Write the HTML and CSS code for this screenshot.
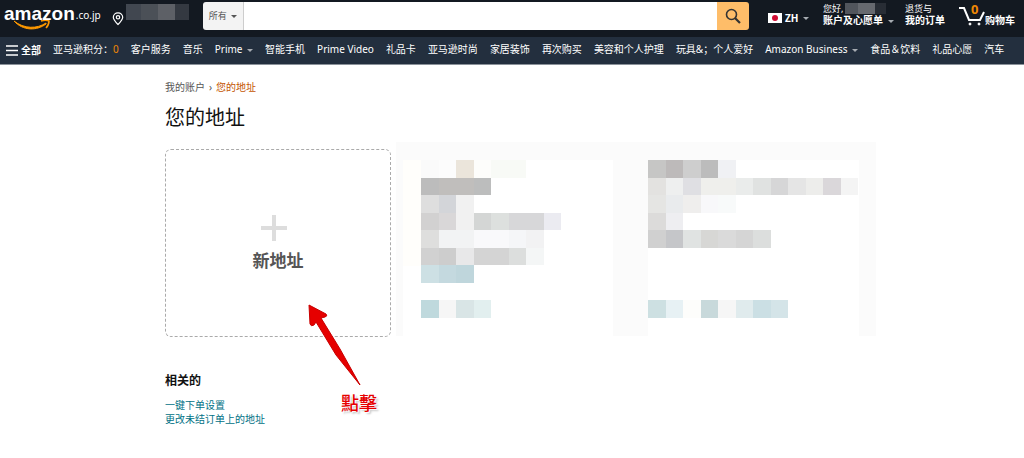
FILE: index.html
```
<!DOCTYPE html>
<html lang="zh-CN">
<head>
    <meta charset="UTF-8">
    <meta name="viewport" content="width=device-width, initial-scale=1.0">
    <title>您的地址</title>
    <link rel="stylesheet" href="styles.css">
</head>
<body>
    <header class="header">
        <a class="logo" href="#" aria-label="amazon.co.jp">
            <span class="logo-word">amazon
                <svg class="logo-smile" viewBox="0 0 40 10" aria-hidden="true">
                    <path d="M1 1C11 9 24 9 33 3L33 4C24 11 10 11 1 1z" fill="#ff9900" stroke="#ff9900"/>
                    <path d="M28 1C31 0 34 0 36 1C36 4 35 6 33 8" fill="none" stroke="#ff9900" stroke-width="1.6"/>
                </svg>
            </span>
            <span class="logo-domain">.co.jp</span>
        </a>
        <a class="location" href="#" aria-label="配送地址">
            <svg width="12" height="14" viewBox="0 0 12 14" fill="none" stroke="#fff" stroke-width="1.2">
                <path d="M6 12.5C3 9.5 1.3 7.3 1.3 5.3a4.7 4.5 0 0 1 9.4 0C10.7 7.3 9 9.5 6 12.5z"/>
                <circle cx="6" cy="5.3" r="1.7"/>
            </svg>
            <svg width="63" height="16" viewBox="0 0 63 16" shape-rendering="crispEdges">
                <path fill="#414750" d="M0 0h15v16H0z"/>
                <path fill="#4b5057" d="M15 0h17v16H15z"/>
                <path fill="#5d6066" d="M32 0h17v16H32z"/>
                <path fill="#343941" d="M49 0h14v16H49z"/>
            </svg>
        </a>
        <form class="search">
            <button class="search-scope" type="button">所有 <i class="caret"></i></button>
            <input class="search-input" type="text" aria-label="搜索">
            <button class="search-submit" type="submit" aria-label="提交">
                <svg width="16" height="16" viewBox="0 0 16 16" fill="none" stroke="#333">
                    <circle cx="6.5" cy="6.5" r="5" stroke-width="1.6"/>
                    <path d="M10 10l5 5" stroke-width="2.2"/>
                </svg>
            </button>
        </form>
        <div class="tools">
            <button class="lang" type="button">
                <svg width="14" height="10" viewBox="0 0 14 10">
                    <rect width="14" height="10" fill="#fff"/>
                    <circle cx="7" cy="5" r="3" fill="#d00c33"/>
                </svg>
                <b>ZH</b>
                <i class="caret"></i>
            </button>
            <a class="tool account" href="#">
                <span class="tool-top">您好,
                    <svg width="41" height="11" viewBox="0 0 41 11" shape-rendering="crispEdges">
                        <path fill="#51555c" d="M0 0h13v11H0z"/>
                        <path fill="#66696f" d="M13 0h17v11H13z"/>
                        <path fill="#282d35" d="M30 0h11v11H30z"/>
                    </svg>
                </span>
                <b>账户及心愿单 <i class="caret"></i></b>
            </a>
            <a class="tool" href="#">
                <span class="tool-top">退货与</span>
                <b>我的订单</b>
            </a>
            <a class="cart" href="#">
                <svg width="26" height="20" viewBox="0 0 26 20" fill="none" stroke="#fff" stroke-width="2">
                    <path d="M0 2h5l5 12h11l4-8"/>
                    <circle cx="11" cy="18" r="1" fill="#fff" stroke-width="1"/>
                    <circle cx="20" cy="18" r="1" fill="#fff" stroke-width="1"/>
                </svg>
                <span class="cart-count">0</span>
                <b>购物车</b>
            </a>
        </div>
    </header>

    <nav class="nav">
        <a class="nav-all" href="#">
            <svg width="12" height="11" viewBox="0 0 12 11" stroke="#fff" stroke-width="1.3">
                <path d="M0 1h12M0 5.5h12M0 10h12"/>
            </svg>
            <b>全部</b>
        </a>
        <a href="#">亚马逊积分：<span class="points">0</span></a>
        <a href="#">客户服务</a>
        <a href="#">音乐</a>
        <a href="#">Prime <i class="caret"></i></a>
        <a href="#">智能手机</a>
        <a href="#">Prime Video</a>
        <a href="#">礼品卡</a>
        <a href="#">亚马逊时尚</a>
        <a href="#">家居装饰</a>
        <a href="#">再次购买</a>
        <a href="#">美容和个人护理</a>
        <a href="#">玩具&amp;；个人爱好</a>
        <a href="#">Amazon Business <i class="caret"></i></a>
        <a href="#">食品＆饮料</a>
        <a href="#">礼品心愿</a>
        <a href="#">汽车</a>
    </nav>

    <main class="page">
        <div class="breadcrumb">
            <a href="#">我的账户</a>
            <span>›</span>
            <span class="current">您的地址</span>
        </div>
        <h1>您的地址</h1>

        <div class="addresses">
            <a class="new-address" href="#">
                <svg width="34" height="26" viewBox="0 0 34 26" fill="#ddd">
                    <path d="M11 0h4v11h11v4H15v11h-4V15H0v-4h11z"/>
                </svg>
                <b>新地址</b>
            </a>
            <!-- saved addresses, masked -->
            <svg class="saved" width="217" height="194" viewBox="0 0 217 194" shape-rendering="crispEdges">
                <path fill="#fbfbfb" d="M0 0h217v18H7v176H0z"/>
                <path fill="#fffefb" d="M7 18h18v106H7z"/>
                <g transform="translate(25 18) scale(17.5)">
                    <path fill="#fafafa" d="M0 0h1v1H0z"/>
                    <path fill="#fcfcfc" d="M1 0h1v1H1z"/>
                    <path fill="#ebe5db" d="M2 0h1v1H2z"/>
                    <path fill="#fdfdfb" d="M3 0h1v1H3z"/>
                    <path fill="#f8faf6" d="M4 0h2v1H4z"/>
                    <path fill="#bcbcbc" d="M0 1h1v1H0z"/>
                    <path fill="#c0bebc" d="M1 1h2v1H1z"/>
                    <path fill="#bcbdbd" d="M3 1h1v1H3z"/>
                    <path fill="#dedede" d="M0 2h1v1H0z"/>
                    <path fill="#d3d5d9" d="M1 2h1v1H1z"/>
                    <path fill="#f1f1f1" d="M2 2h1v2H2z"/>
                    <path fill="#d2d1d1" d="M0 3h1v1H0z"/>
                    <path fill="#d9d7d8" d="M1 3h1v1H1z"/>
                    <path fill="#d4d6d5" d="M3 3h1v1H3z"/>
                    <path fill="#dde0de" d="M4 3h1v1H4z"/>
                    <path fill="#d7d7d9" d="M5 3h2v1H5z"/>
                    <path fill="#ebebf1" d="M7 3h1v1H7z"/>
                    <path fill="#dededd" d="M0 4h1v1H0z"/>
                    <path fill="#f2f3f4" d="M1 4h2v1H1z"/>
                    <path fill="#f9f9fb" d="M3 4h2v1H3z"/>
                    <path fill="#f5f6f8" d="M5 4h1v1H5z"/>
                    <path fill="#f2f2f3" d="M6 4h1v1H6z"/>
                    <path fill="#d1d1d1" d="M0 5h1v1H0z"/>
                    <path fill="#cdcdcd" d="M1 5h1v1H1z"/>
                    <path fill="#e8e8e9" d="M2 5h1v1H2z"/>
                    <path fill="#d4d4d4" d="M3 5h2v1H3z"/>
                    <path fill="#dcdedd" d="M5 5h1v1H5z"/>
                    <path fill="#f4f6f6" d="M6 5h1v1H6z"/>
                    <path fill="#cde0e4" d="M0 6h1v1H0z"/>
                    <path fill="#c4d9df" d="M1 6h1v1H1z"/>
                    <path fill="#bfd6dc" d="M2 6h1v1H2z"/>
                    <path fill="#bfd9dd" d="M0 8h1v1H0z"/>
                    <path fill="#f6f6f6" d="M1 8h1v1H1z"/>
                    <path fill="#d9e5e6" d="M2 8h1v1H2z"/>
                    <path fill="#e2efef" d="M3 8h1v1H3z"/>
                </g>
            </svg>
            <svg class="saved" width="263" height="194" viewBox="0 0 263 194" shape-rendering="crispEdges">
                <path fill="#fbfbfb" d="M0 0h263v194h-17V18H35v176H0z"/>
                <g transform="translate(35 18) scale(17.5)">
                    <path fill="#c6c6c5" d="M0 0h1v1H0z"/>
                    <path fill="#bdbaba" d="M1 0h1v1H1z"/>
                    <path fill="#cecece" d="M2 0h1v1H2z"/>
                    <path fill="#bcbcbc" d="M3 0h1v1H3z"/>
                    <path fill="#f0f1f4" d="M4 0h1v1H4z"/>
                    <path fill="#e3e2e0" d="M0 1h1v1H0z"/>
                    <path fill="#eeefef" d="M1 1h1v1H1z"/>
                    <path fill="#dfdfe3" d="M2 1h1v1H2z"/>
                    <path fill="#efefec" d="M3 1h2v1H3z"/>
                    <path fill="#eaeceb" d="M5 1h1v1H5z"/>
                    <path fill="#e0e2e1" d="M6 1h1v1H6z"/>
                    <path fill="#d6d6d7" d="M7 1h1v1H7z"/>
                    <path fill="#e5e5e5" d="M8 1h1v1H8z"/>
                    <path fill="#ededeb" d="M9 1h1v1H9z"/>
                    <path fill="#dad7da" d="M10 1h1v1H10z"/>
                    <path fill="#f4f4f4" d="M11 1h1v1H11z"/>
                    <path fill="#e5e5e3" d="M0 2h1v1H0z"/>
                    <path fill="#e9ebed" d="M1 2h1v1H1z"/>
                    <path fill="#efeeed" d="M2 2h1v1H2z"/>
                    <path fill="#f8f8fa" d="M3 2h1v1H3z"/>
                    <path fill="#f8fafa" d="M4 2h1v1H4z"/>
                    <path fill="#dcdbda" d="M0 3h1v1H0z"/>
                    <path fill="#eeeef1" d="M1 3h1v1H1z"/>
                    <path fill="#d0d0d0" d="M0 4h1v1H0z"/>
                    <path fill="#c5c6c9" d="M1 4h1v1H1z"/>
                    <path fill="#e0e3e2" d="M2 4h1v1H2z"/>
                    <path fill="#d7d7d5" d="M3 4h1v1H3z"/>
                    <path fill="#dadada" d="M4 4h1v1H4z"/>
                    <path fill="#d5d5d5" d="M5 4h1v1H5z"/>
                    <path fill="#dcdedd" d="M6 4h1v1H6z"/>
                    <path fill="#cde0e2" d="M0 8h1v1H0z"/>
                    <path fill="#e7f1f4" d="M1 8h1v1H1z"/>
                    <path fill="#fdfdfb" d="M2 8h1v1H2z"/>
                    <path fill="#c8d9db" d="M3 8h1v1H3z"/>
                    <path fill="#f6f6f6" d="M4 8h1v1H4z"/>
                    <path fill="#e0ebed" d="M5 8h1v1H5z"/>
                    <path fill="#cbdfe4" d="M6 8h1v1H6z"/>
                    <path fill="#d4e4e8" d="M7 8h1v1H7z"/>
                </g>
            </svg>
            <div class="callout">
                <svg width="54" height="84" viewBox="0 0 54 84">
                    <path d="M2 2L18 11L12 13L52 81L9 17L4 21z" fill="#e60000"/>
                    <path d="M1 1L18 10Q20 12 17 13L13 14L32 45L52 81L28 51L8 18L6 21Q3 23 2 20z" fill="#e60000" stroke="#c80000"/>
                </svg>
                <span>點擊</span>
            </div>
        </div>

        <section class="related">
            <h2>相关的</h2>
            <ul>
                <li><a href="#">一键下单设置</a></li>
                <li><a href="#">更改未结订单上的地址</a></li>
            </ul>
        </section>
    </main>
</body>
</html>
```
FILE: styles.css
```
* {
    box-sizing: border-box;
}
body {
    margin: 0;
    background: #fff;
    color: #111;
    font: 10px/14px "Noto Sans", "Noto Sans CJK SC", sans-serif;
}
a {
    color: inherit;
    text-decoration: none;
}
button {
    border: 0;
    padding: 0;
    font: inherit;
    cursor: pointer;
}
svg {
    display: block;
    flex: none;
}
.caret {
    display: inline-block;
    margin-left: 2px;
    border: 3px solid transparent;
    border-top-color: #a7acb2;
    border-bottom: 0;
    vertical-align: middle;
}

/* header */
.header {
    display: flex;
    height: 37px;
    padding: 2px 9px 0 4px;
    background: #131921;
    color: #fff;
}
.logo {
    display: flex;
    width: 108px;
}
.logo-word {
    position: relative;
    font: bold 19px/24px "Liberation Sans", sans-serif;
}
.logo-smile {
    position: absolute;
    left: 9px;
    top: 18px;
    width: 40px;
    height: 10px;
}
.logo-domain {
    padding: 6px 0 0 1px;
}
.location {
    display: flex;
    gap: 2px;
    width: 91px;
    padding-top: 2px;
}
.location svg:first-child {
    margin-top: 8px;
}
.search {
    display: flex;
    flex: 1;
    height: 28px;
    border-radius: 3px;
    overflow: hidden;
}
.search-scope {
    width: 41px;
    background: #f3f3f3;
    color: #555;
    border-right: 1px solid #cdcdcd;
    font-size: 9px;
}
.search-scope .caret {
    border-top-color: #555;
}
.search-input {
    flex: 1;
    min-width: 0;
    border: 0;
    padding: 0 8px;
    font: inherit;
}
.search-submit {
    display: flex;
    align-items: center;
    justify-content: center;
    width: 32px;
    background: #febd69;
}
.tools {
    display: flex;
    margin-left: 19px;
    line-height: 12px;
}
.tool b {
    white-space: nowrap;
}
.lang {
    display: flex;
    align-items: center;
    gap: 3px;
    width: 55px;
    height: 32px;
    background: none;
    color: #fff;
}
.tool {
    width: 54px;
    padding-top: 1px;
}
.account {
    width: 82px;
}
.tool-top {
    display: flex;
    gap: 2px;
    height: 11px;
    font-size: 9px;
}
.cart {
    display: flex;
    position: relative;
    padding-top: 4px;
}
.cart b {
    padding-top: 8px;
}
.cart-count {
    position: absolute;
    left: 12px;
    top: 1px;
    color: #f08804;
    font-size: 13px;
    font-weight: bold;
}

/* navigation bar */
.nav {
    display: flex;
    gap: 12px;
    height: 28px;
    padding: 0 6px;
    border-bottom: 1px solid #8b929a;
    background: #232f3e;
    color: #fff;
    line-height: 25px;
    white-space: nowrap;
}
.nav-all {
    display: flex;
    align-items: center;
    gap: 3px;
}
.points {
    color: #f08804;
}

/* address book */
.page {
    max-width: 728px;
    margin: 0 auto;
    padding: 15px 0 0 17px;
}
.breadcrumb {
    display: flex;
    gap: 4px;
    color: #555;
}
.current {
    color: #c45500;
}
h1 {
    margin: 10px 0;
    font-size: 20px;
    font-weight: normal;
    line-height: 28px;
}
.addresses {
    display: flex;
    position: relative;
}
.new-address {
    display: flex;
    flex: 1;
    flex-direction: column;
    align-items: center;
    justify-content: center;
    gap: 8px;
    height: 188px;
    margin: 7px 5px 0 0;
    padding-top: 2px;
    border: 1px dashed #aaa;
    border-radius: 6px;
    color: #555;
    font-size: 17px;
    line-height: 24px;
}
.callout {
    position: absolute;
    left: 143px;
    top: 162px;
    color: #e60000;
    font: 500 18px/28px "Noto Sans CJK TC", sans-serif;
    text-shadow: 0 0 1px #fff, 1px 1px 1px #fff, 2px 2px 2px #bbb;
}
.callout span {
    display: block;
    margin-left: 33px;
}
.related {
    margin-top: 35px;
}
.related h2 {
    margin: 0 0 8px;
    font-size: 12px;
    line-height: 18px;
}
.related ul {
    margin: 0;
    padding: 0;
    list-style: none;
    color: #007185;
}
```
